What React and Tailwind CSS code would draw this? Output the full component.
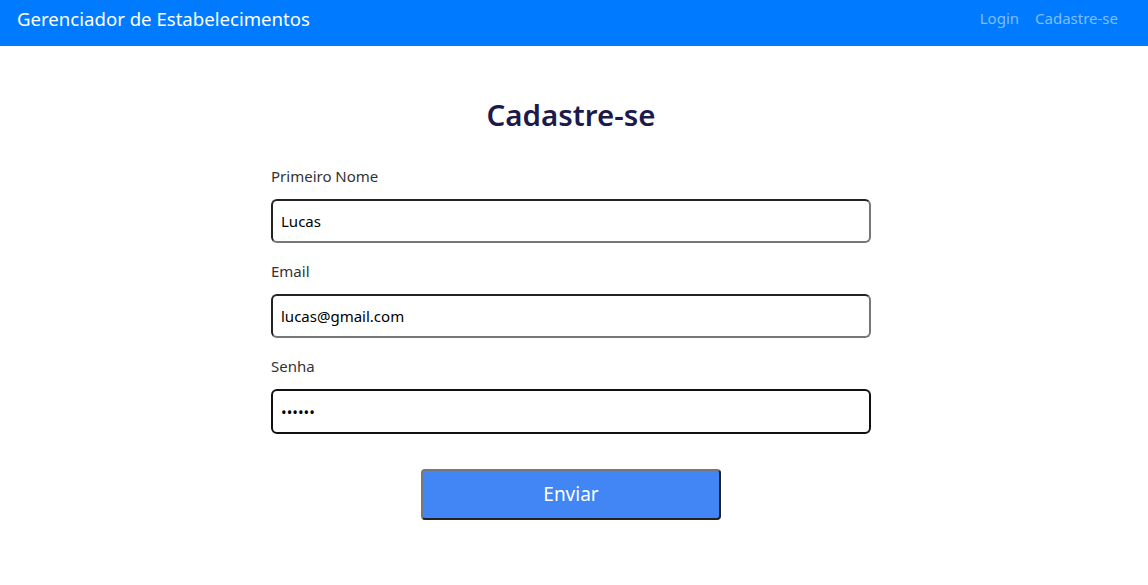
export default function App() {
  return (
    <div className="min-h-[585px] bg-white" style={{ fontFamily: '"Noto Sans", "Open Sans", sans-serif' }}>
      <nav className="flex h-[46px] items-center justify-between bg-[#007bff] pb-[8px] pl-[17px] pr-[30px]">
        <span className="text-[18.6px] text-white">Gerenciador de Estabelecimentos</span>
        <div className="-mt-[2px] flex gap-[16px] text-[15px] text-[#80bdff]">
          <a>Login</a>
          <a>Cadastre-se</a>
        </div>
      </nav>

      <main className="ml-[271px] w-[600px] pt-[49px]">
        <h1 className="text-center text-[29.5px] font-semibold leading-[40px] text-[#1c1a4d]">Cadastre-se</h1>

        <form className="mt-[31px]" onSubmit={(e) => e.preventDefault()}>
          <label className="block text-[15px] leading-[20px] text-[#333]">Primeiro Nome</label>
          <input
            defaultValue="Lucas"
            className="mt-[13px] block h-[44px] w-full rounded-[6px] border-2 border-t-[#222] border-l-[#222] border-r-[#777] border-b-[#777] px-[8px] text-[15px] text-black outline-none"
          />

          <label className="mt-[18px] block text-[15px] leading-[20px] text-[#333]">Email</label>
          <input
            defaultValue="lucas@gmail.com"
            className="mt-[13px] block h-[44px] w-full rounded-[6px] border-2 border-t-[#222] border-l-[#222] border-r-[#777] border-b-[#777] px-[8px] text-[15px] text-black outline-none"
          />

          <label className="mt-[18px] block text-[15px] leading-[20px] text-[#333]">Senha</label>
          <input
            type="password"
            defaultValue="123456"
            autoFocus
            className="mt-[13px] block h-[45px] w-full rounded-[6px] border-2 border-[#111] px-[8px] text-[15px] text-black caret-black outline-none"
          />

          <div className="flex justify-center pt-[35px]">
            <button
              type="submit"
              className="h-[51px] w-[300px] rounded-[4px] border-2 border-t-[#777] border-l-[#777] border-r-[#222] border-b-[#222] bg-[#4285f4] text-[19px] text-white"
            >
              Enviar
            </button>
          </div>
        </form>
      </main>
    </div>
  );
}
